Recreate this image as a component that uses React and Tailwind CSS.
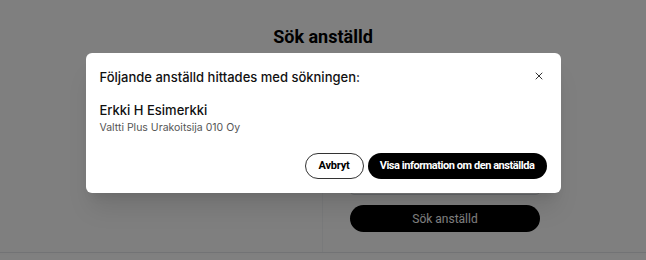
import { X } from "lucide-react";

const App = () => {
  return (
    <div className="relative h-[260px] w-full overflow-hidden bg-white font-['Inter',sans-serif]">
      {/* Page behind the dialog */}
      <div className="flex h-[253px] flex-col items-center border-b border-gray-200">
        <h1 className="mt-[23px] font-['Liberation_Sans_Narrow','Roboto',sans-serif] text-[18px] font-bold text-black">
          Sök anställd
        </h1>
        <div className="mt-[14px] flex w-full flex-1">
          <div className="w-[323px] border-r border-gray-100" />
          <div className="flex flex-col pl-[27px]">
            <div className="h-[131px] w-[190px] rounded border border-gray-300" />
            <button className="mt-[10px] h-[27px] w-[190px] rounded-full bg-black font-['Liberation_Sans_Narrow','Roboto',sans-serif] text-[12px] text-white">
              Sök anställd
            </button>
          </div>
        </div>
      </div>

      {/* Overlay */}
      <div className="absolute inset-0 bg-black/50">
        <div className="mx-auto mt-[53px] w-[475px] rounded-md bg-white px-[14px] pb-[14px] pt-[15px] shadow-xl">
          <div className="flex items-start justify-between">
            <h2 className="text-[13px] font-medium leading-[18px] text-[#111]">
              Följande anställd hittades med sökningen:
            </h2>
            <button className="mr-[2px] mt-[2px] text-[#333]">
              <X size={12} strokeWidth={2} />
            </button>
          </div>
          <p className="mt-[15px] text-[13px] font-medium leading-[18px] text-[#111]">
            Erkki H Esimerkki
          </p>
          <p className="mt-[1px] text-[10.5px] leading-[16px] text-[#555]">
            Valtti Plus Urakoitsija 010 Oy
          </p>
          <div className="mt-[17px] flex justify-end gap-[4px]">
            <button className="h-[26px] w-[59px] rounded-full border border-[#333] font-['Liberation_Sans_Narrow','Roboto',sans-serif] text-[11px] font-bold tracking-[-0.2px] text-black">
              Avbryt
            </button>
            <button className="h-[26px] w-[179px] rounded-full bg-black font-['Liberation_Sans_Narrow','Roboto',sans-serif] text-[11px] font-bold tracking-[-0.45px] text-white">
              Visa information om den anställda
            </button>
          </div>
        </div>
      </div>
    </div>
  );
};

export default App;
